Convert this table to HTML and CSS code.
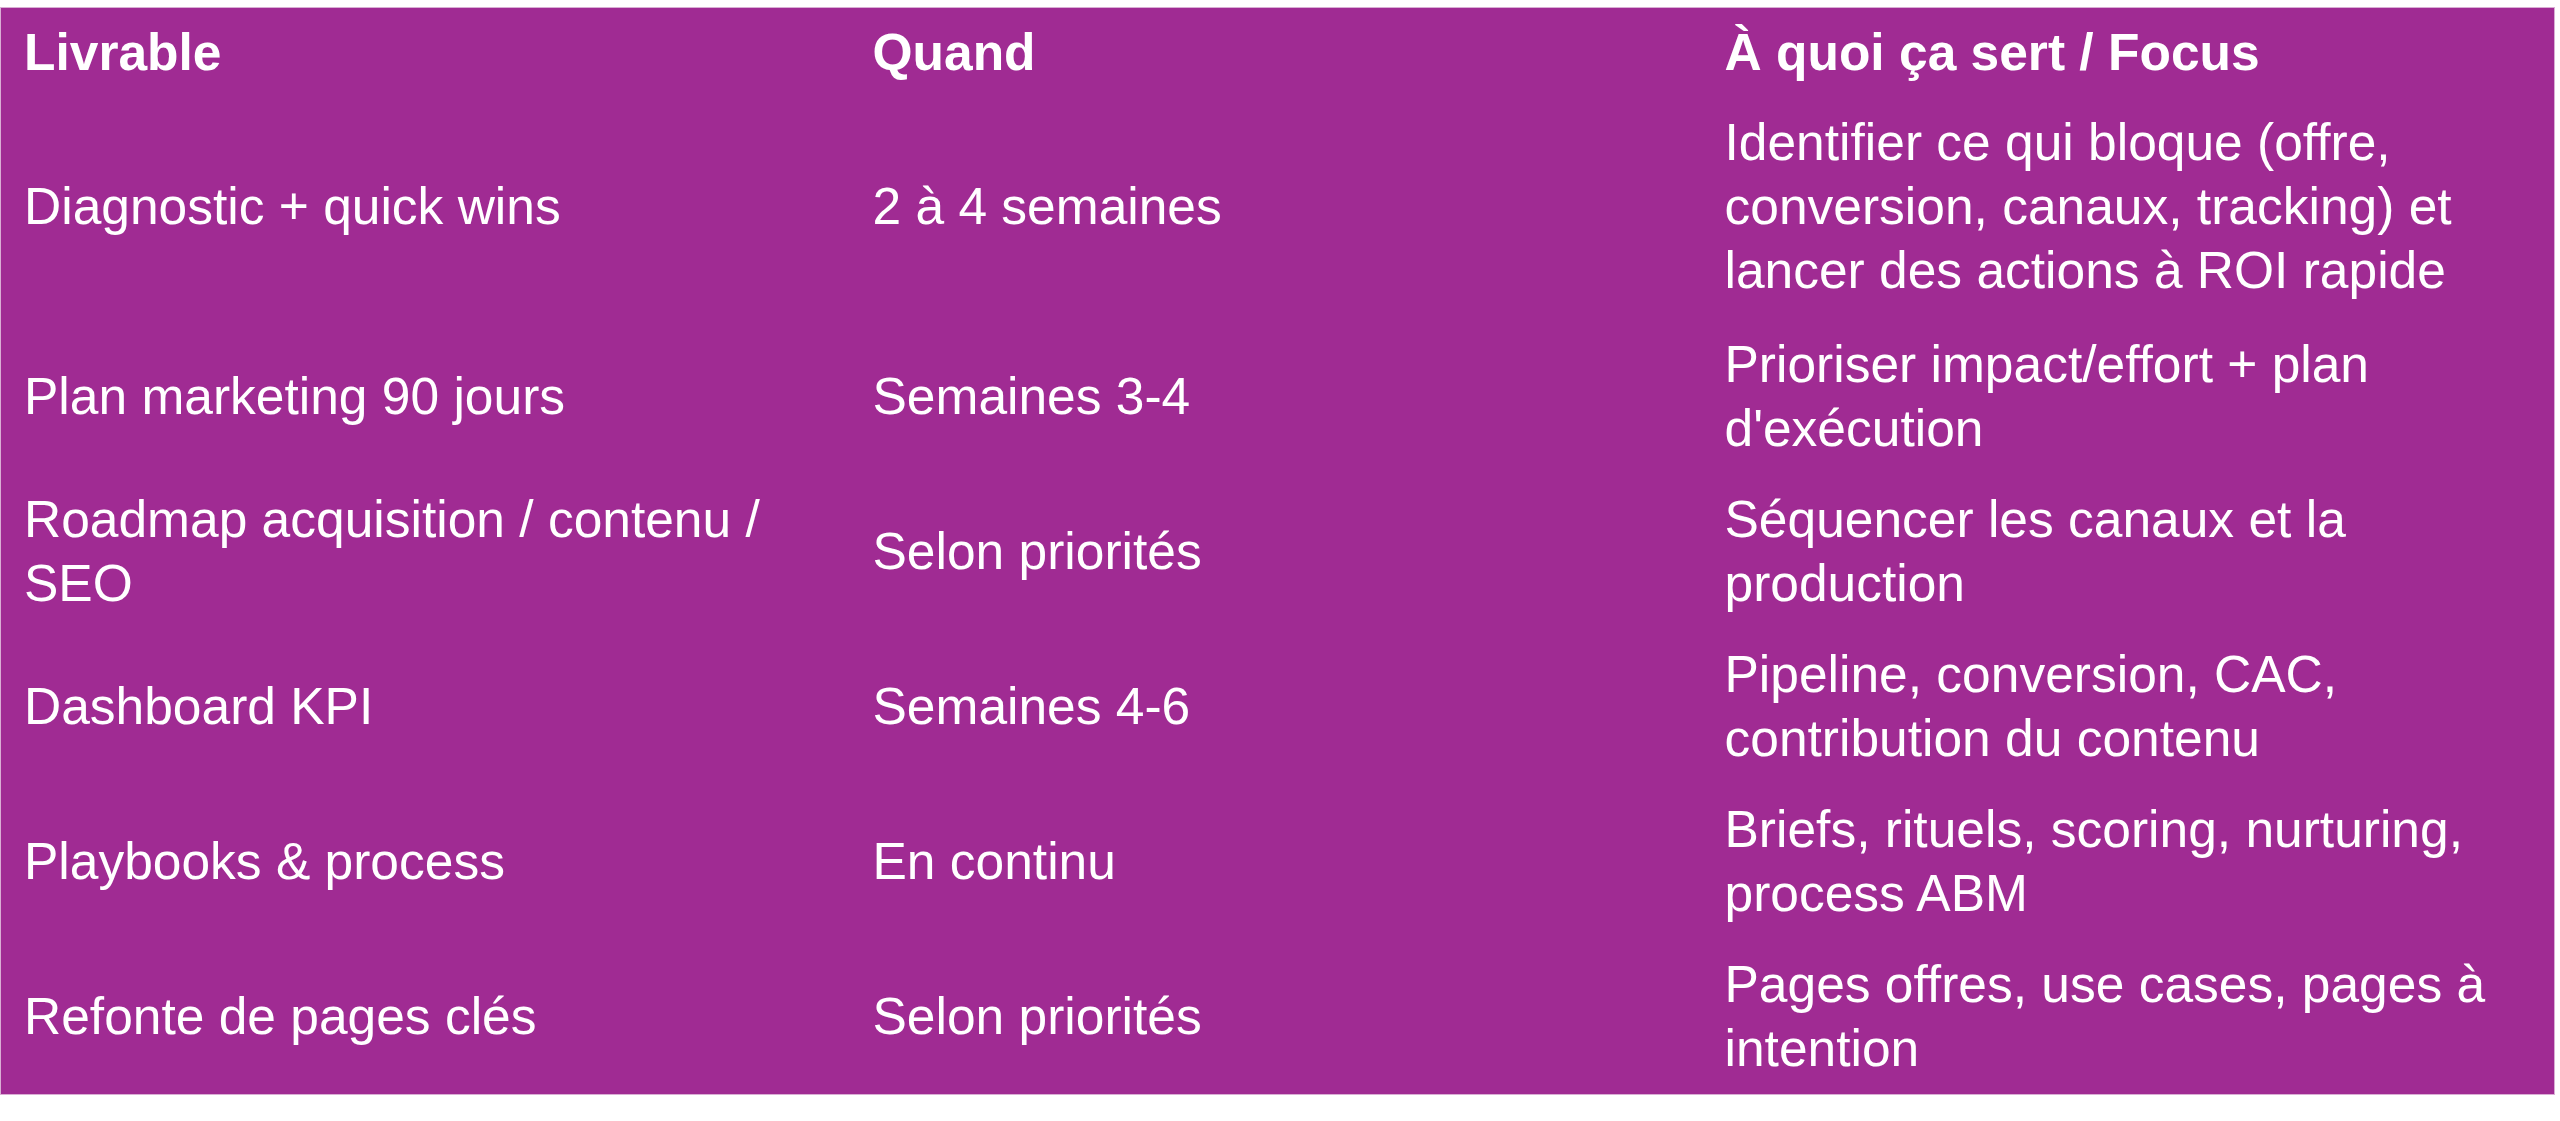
FILE: index.html
```html
<!DOCTYPE html>
<html lang="fr">
<head>
<meta charset="utf-8">
<title>Livrables</title>
<link rel="stylesheet" href="styles.css">
</head>
<body>
<table class="plan">
  <colgroup>
    <col class="c1">
    <col class="c2">
    <col class="c3">
  </colgroup>
  <thead>
    <tr class="head">
      <th>Livrable</th>
      <th>Quand</th>
      <th>À quoi ça sert / Focus</th>
    </tr>
  </thead>
  <tbody>
    <tr class="first">
      <td>Diagnostic + quick wins</td>
      <td>2 à 4 semaines</td>
      <td>Identifier ce qui bloque (offre, conversion, canaux, tracking) et lancer des actions à ROI rapide</td>
    </tr>
    <tr>
      <td>Plan marketing 90 jours</td>
      <td>Semaines 3-4</td>
      <td>Prioriser impact/effort + plan d'exécution</td>
    </tr>
    <tr>
      <td>Roadmap acquisition / contenu / SEO</td>
      <td>Selon priorités</td>
      <td>Séquencer les canaux et la production</td>
    </tr>
    <tr>
      <td>Dashboard KPI</td>
      <td>Semaines 4-6</td>
      <td>Pipeline, conversion, CAC, contribution du contenu</td>
    </tr>
    <tr>
      <td>Playbooks &amp; process</td>
      <td>En continu</td>
      <td>Briefs, rituels, scoring, nurturing, process ABM</td>
    </tr>
    <tr>
      <td>Refonte de pages clés</td>
      <td>Selon priorités</td>
      <td>Pages offres, use cases, pages à intention</td>
    </tr>
  </tbody>
</table>
</body>
</html>
```
FILE: styles.css
```css
html, body {
  margin: 0;
  padding: 0;
  background: #ffffff;
}

body {
  padding-top: 7px;
  font-family: "Liberation Sans", Arial, sans-serif;
}

.plan {
  width: 2555px;
  border-collapse: collapse;
  table-layout: fixed;
  background: #a02b93;
  color: #ffffff;
  border: 1px solid #d9aed4;
  font-size: 51.5px;
  line-height: 64px;
}

.c1 { width: 849px; }
.c2 { width: 852px; }
.c3 { width: auto; }

.plan th,
.plan td {
  padding: 13.6px 22px 13.6px 23px;
  text-align: left;
  vertical-align: middle;
}

.plan th {
  font-weight: 700;
  padding-top: 12px;
  padding-bottom: 13px;
}

.plan tr.first td {
  padding-top: 13px;
  padding-bottom: 16px;
}
```
